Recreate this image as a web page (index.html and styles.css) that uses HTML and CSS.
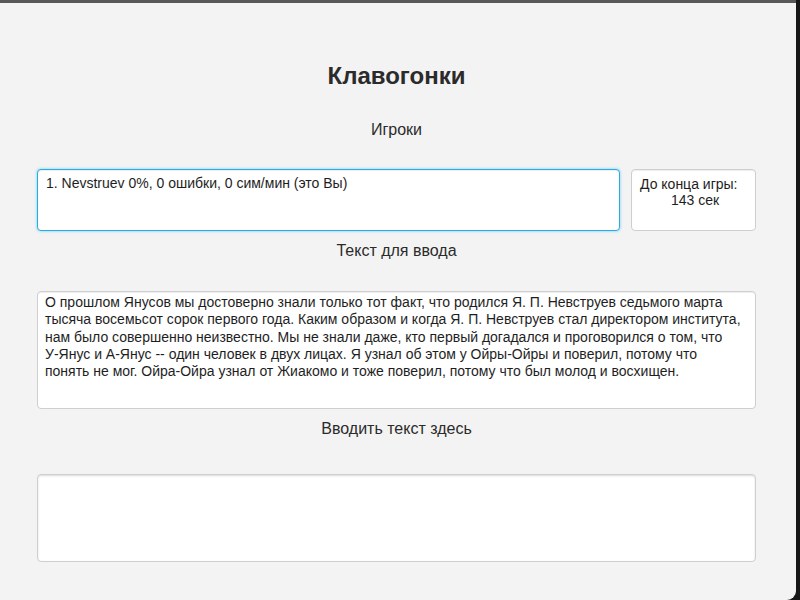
FILE: index.html
```html
<!DOCTYPE html>
<html lang="ru">
<head>
<meta charset="utf-8">
<title>Клавогонки</title>
<link rel="stylesheet" href="styles.css">
</head>
<body>
<div class="window">
  <div class="container">
    <h1 class="title">Клавогонки</h1>
    <div class="label label-players">Игроки</div>
    <div class="players-row">
      <div class="box players">1. Nevstruev 0%, 0 ошибки, 0 сим/мин (это Вы)</div>
      <div class="box timer">
        <div class="timer-caption">До конца игры:</div>
        <div class="timer-value">143 сек</div>
      </div>
    </div>
    <div class="label label-text">Текст для ввода</div>
    <div class="box source-text">О прошлом Янусов мы достоверно знали только тот факт, что родился Я. П. Невструев седьмого марта тысяча восемьсот сорок первого года. Каким образом и когда Я. П. Невструев стал директором института, нам было совершенно неизвестно. Мы не знали даже, кто первый догадался и проговорился о том, что <span class="nowrap">У-Янус</span> и <span class="nowrap">А-Янус</span> -- один человек в двух лицах. Я узнал об этом у <span class="nowrap">Ойры-Ойры</span> и поверил, потому что понять не мог. Ойра-Ойра узнал от Жиакомо и тоже поверил, потому что был молод и восхищен.</div>
    <div class="label label-input">Вводить текст здесь</div>
    <textarea class="box input-area"></textarea>
  </div>
</div>
</body>
</html>
```

FILE: styles.css
```css
html, body {
  margin: 0;
  padding: 0;
  height: 100%;
}
body {
  background: #161616;
  font-family: "Liberation Sans", Arial, sans-serif;
  color: #2b2b2b;
  overflow: hidden;
}
.window {
  height: 597px;
  margin-right: 4px;
  background: #f3f3f3;
  border-top: 3px solid #585858;
  border-bottom-right-radius: 9px;
}
.container {
  width: 719px;
  margin-left: 37px;
  padding-top: 59px;
}
.title {
  margin: 0;
  font-size: 24px;
  line-height: 28px;
  font-weight: bold;
  text-align: center;
  color: #2b2b2b;
}
.label {
  text-align: center;
  font-size: 16px;
  line-height: 20px;
  color: #2b2b2b;
}
.label-players {
  margin-top: 30px;
}
.label-text {
  margin-top: 10px;
}
.label-input {
  margin-top: 10px;
}
.players-row {
  display: flex;
  gap: 11px;
  margin-top: 29px;
}
.box {
  box-sizing: border-box;
  background: #fff;
  border: 1px solid #cfcfcf;
  border-radius: 4px;
  box-shadow: inset 0 1px 1px rgba(0, 0, 0, 0.075);
  font-size: 14px;
  color: #1e1e1e;
}
.players {
  flex: 1;
  height: 62px;
  padding: 5px 8px;
  line-height: 17px;
  border-color: #22aee6;
  box-shadow: inset 0 1px 1px rgba(0, 0, 0, 0.075), 0 0 3px rgba(34, 174, 230, 0.6);
}
.timer {
  width: 125px;
  height: 62px;
  padding: 6px 8px;
  font-size: 14px;
  line-height: 16px;
}
.timer-value {
  text-align: center;
  padding-left: 3px;
}
.source-text {
  margin-top: 30px;
  height: 118px;
  padding: 2px 12px 2px 7px;
  line-height: 17.3px;
}
.nowrap {
  white-space: nowrap;
}
.input-area {
  display: block;
  width: 100%;
  height: 88px;
  margin: 35px 0 0;
  padding: 4px 8px;
  resize: none;
  outline: none;
  font-family: inherit;
  box-shadow: inset 0 1px 2px rgba(0, 0, 0, 0.15);
}
```
